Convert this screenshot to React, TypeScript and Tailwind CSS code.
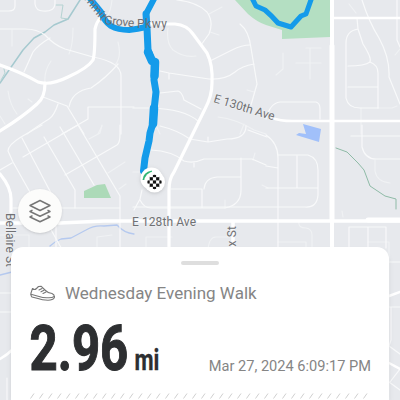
const minorRoads = [
  // northwest
  'M0 11H9Q15 11 15 6V0 M35 0V4Q36 11 43 11Q55 12 55 3V0',
  'M0 29H25Q37 29 45 35Q54 45 65 49L93 57Q121 62 121 76V134',
  'M50 38Q38 45 33 52L24 72',
  'M118 64Q106 78 91 88Q72 91 69 107',
  'M43 97L67 106L84 134 M58 104Q54 116 49 119Q36 127 27 134',
  'M62 134L88 119V107H134',
  // north middle
  'M177 0Q197 2 207 12Q214 22 209 34L201 45',
  'M240 24Q249 31 251 48L257 84L251 105',
  'M210 61L232 50Q242 45 250 45 M160 71L169 73L209 79Q225 80 235 72Q242 66 254 64 M169 73V79',
  'M160 93L178 91Q182 92 184 100L201 109 M133 108H151Q184 109 198 121',
  // middle
  'M8 151Q8 145 21 137L42 125M8 151L13 162L68 260 M22 138L51 193 M44 137L75 190V208 M0 170L12 163',
  'M60 127L94 185 M23 157L78 125 M65 175L117 145Q120 143 120 134V125 M78 125L120 196V248',
  'M13 208H120 M56 222V247',
  'M134 210L140 199L142 190 M140 200Q144 208 151 208H225Q241 205 241 190V158 M171 189H202V208 M204 189Q205 178 217 177H241',
  'M151 150Q172 151 184 161Q193 164 204 159H252L266 165 M194 162V167',
  'M160 126Q177 130 190 139L208 142L227 139Q246 139 246 126 M208 137V141 M248 130L267 137',
  // east
  'M266 119Q270 103 280 102H316Q320 103 320 109V119',
  'M357 18L358 29L363 44Q372 58 370 62Q365 66 348 66 M358 29Q346 31 346 43V98Q348 108 360 108H378',
  'M362 0Q369 22 379 38Q390 58 389 77L400 104 M370 62Q378 65 378 73V108 M348 87H378 M397 0V40L400 47',
  'M266 135Q278 143 278 158V250 M278 155H308Q318 158 318 170V195Q317 208 305 207H133 M297 156V188 M266 188H318 M266 166L278 168',
  'M362 125V147Q365 159 376 159H400 M351 136H400',
  'M349 248V227H386V248 M368 227V250',
  // strips beside the sheet
  'M0 293H12 M0 312H12 M389 262H400 M389 307H400 M391 307V340L389 346L400 354 M390 382L400 369 M7 378V400 M389 382L400 390',
]

// driveways and courts, barely lighter than the ground
const faintRoads = [
  'M73 28Q73 45 69 54 M12 30V46 M51 61Q44 71 45 82 M118 42Q122 57 115 65 M8 91Q10 105 17 114 M102 126L98 134 M0 116L5 124 M28 99L32 102',
  'M112 0Q111 11 106 19 M209 14L222 7 M210 32L219 35 M168 28Q166 43 173 50Q184 58 196 56 M247 90L254 92 M155 123L160 134 M218 117Q236 119 254 130L266 134 M244 124L240 134',
  'M89 139L100 133L102 125 M108 173L125 162 M119 189L126 184 M0 235H29V250 M97 250V237L112 235 M225 200V208 M133 172H142 M255 153L253 160 M262 185L268 188',
  'M146 250V237H172 M208 250Q209 237 216 237H232',
  'M283 53V69L276 75 M306 48H321 M296 63H321 M310 48V79 M378 108H392L397 106 M400 49L395 55 M361 108V134 M375 160V171Q377 182 390 183 M349 4L356 13',
  'M299 222Q298 228 306 228Q312 229 312 235V248 M278 242H306V250 M368 242H389V400 M342 211L343 217',
]

const majorRoads = [
  'M0 131Q24 116 37 104Q45 98 45 83',
  'M0 65Q23 73 38 82Q50 86 68 77Q88 68 93 60Q95 54 95 29Q97 21 100 19',
  'M150 24H175Q187 25 193 34L207 53Q213 65 212 83Q212 96 205 109L174 172Q169 179 169 190V252',
  'M0 174Q11 187 11 199V212',
]

function MapBackground() {
  return (
    <svg
      viewBox="0 0 400 400"
      className="absolute inset-0 size-full"
      fill="none"
      strokeLinecap="round"
      strokeLinejoin="round"
    >
      <path d="M235 0L248 14Q257 22 266 25L282 30V39L330 37V0Z" fill="#b4dfc2" />
      <path d="M84 194V191L97 185L105 184L111 198H84Z" fill="#acdab8" />
      <path d="M303 124L321 129L319 142L296 135L299 133L306 134Z" fill="#a1c0fa" />

      <path d="M80 0L68 19L54 25L45 32L34 38L23 50L0 83" stroke="#a5c9cf" strokeWidth="1.5" />
      <path d="M56 5H63L61 18L68 19 M4 69L5 73L1 80" stroke="#b5d3d2" />
      <path d="M336 148L347 152L358 163L364 170L370 186L385 196L396 199V209" stroke="#8fbba7" />
      <path
        d="M50 246Q55 241 61 239L71 238L86 230Q94 225 104 226L117 225Q124 233 134 234 M0 275L12 272"
        stroke="#b5c9ef"
        strokeWidth="1.3"
      />

      {faintRoads.map((d) => (
        <path key={d} d={d} stroke="#f0f2f4" strokeWidth="1.1" />
      ))}
      {minorRoads.map((d) => (
        <path key={d} d={d} stroke="#f8f9fa" strokeWidth="1.2" />
      ))}
      {majorRoads.map((d) => (
        <path key={d} d={d} stroke="#fff" strokeWidth="3.2" />
      ))}
      <path d="M0 359Q7 355 12 350 M389 363L400 369 M389 296L400 292" stroke="#fff" strokeWidth="2.5" />
      <path d="M272 118Q280 121 292 121H400 M334 18H400" stroke="#fff" strokeWidth="2.6" />
      <path d="M0 223H60L104 221H400 M233 221V250" stroke="#fff" strokeWidth="3.5" />
      <path d="M368 220H400" stroke="#fff" strokeWidth="5" />
      <path d="M332 0V250" stroke="#fff" strokeWidth="4" />
      <path d="M332 46V220" stroke="#fff" strokeWidth="5" />

      <g stroke="#149bea">
        <path
          d="M88 -4L101 12Q104 21 111 26Q118 30 129 30Q138 29 146 27 M155 -3L146 14L147 28"
          strokeWidth="6"
        />
        <path
          d="M146 14L147 28L148 50L152 61L155 63L154 80L156 92L154 110L153 123L150 133L149 141L145 158L143.5 171"
          strokeWidth="7"
        />
        <path d="M148 52L152 61L155 62L154.5 76 M154 108L153 124" strokeWidth="8.5" />
        <path d="M251 -4L256 6L265 10Q272 16 278 23L291 27L301 16L306 14L312 -3" strokeWidth="5" />
      </g>

      <g
        fill="#707174"
        stroke="#eff1f4"
        strokeOpacity="0.7"
        strokeWidth="1.5"
        paintOrder="stroke"
        fontFamily="Roboto, sans-serif"
        fontSize="12"
      >
        <text transform="translate(84 -1) rotate(52)" strokeWidth="0">mmit</text>
        <text transform="translate(104 24) rotate(6)" textLength="30" strokeWidth="0">Grove</text>
        <text x="137" y="28" textLength="30" strokeWidth="0">Pkwy</text>
        <text transform="translate(213 102) rotate(17)" textLength="63">E 130th Ave</text>
        <text x="132" y="226" textLength="64">E 128th Ave</text>
        <text transform="translate(6 213) rotate(90)" textLength="54">Bellaire St</text>
        <text transform="translate(236 260) rotate(-90)" textLength="34">nox St</text>
      </g>
    </svg>
  )
}

function FinishMarker() {
  return (
    <svg viewBox="0 0 34 34" className="absolute left-[136px] top-[163px] size-[34px] drop-shadow">
      <circle cx="15.5" cy="15.5" r="11" fill="#fff" />
      <path d="M8 17Q8.5 10.5 16 9" fill="none" stroke="#31b575" strokeWidth="3" />
      <circle cx="18.5" cy="19" r="10.5" fill="#fff" />
      <clipPath id="flag">
        <circle cx="18.5" cy="19" r="7.2" />
      </clipPath>
      <g clipPath="url(#flag)">
        {[0, 1, 2, 3, 4].map((row) =>
          [0, 1, 2, 3, 4].map((col) =>
            (row + col) % 2 ? null : (
              <rect
                key={`${row}-${col}`}
                x={10.5 + col * 3.2}
                y={11 + row * 3.2}
                width="3.2"
                height="3.2"
                fill="#111"
              />
            )
          )
        )}
      </g>
    </svg>
  )
}

function LayersButton() {
  return (
    <button
      aria-label="Map layers"
      className="absolute left-[18px] top-[189px] flex size-11 items-center justify-center rounded-full bg-[#fcfcfb] shadow-sm"
    >
      <svg viewBox="0 0 24 24" className="size-6" fill="none" stroke="#777" strokeWidth="1.5" strokeLinejoin="round">
        <path d="M12 1.5L22 6.5L12 11.5L2 6.5Z" />
        <path d="M4.5 11.2L2 12.5L12 17.2L22 12.5L19.5 11.2" />
        <path d="M4.5 16.7L2 18L12 22.7L22 18L19.5 16.7" />
      </svg>
    </button>
  )
}

function ShoeIcon() {
  return (
    <svg
      viewBox="0 0 26 17"
      className="h-[17px] w-[26px]"
      fill="none"
      stroke="#777"
      strokeWidth="1.1"
      strokeLinecap="round"
      strokeLinejoin="round"
    >
      <path d="M2.5 3.5Q4.5 5.5 6.5 3.5L8.5 1.5L11 1.2L15.5 5.5Q18 8 22 8.5Q25 10 24.3 12.8Q23 15.2 18 15.2Q12 15.2 8 13.5L2 12Q.5 10.5 1 8Z" />
      <path d="M1 9.2L9 11.5Q13 13 18 12.8Q22 13 24.3 11.5 M9 5L12 3.4 M11 6.8L14 5.2 M13 8.5L16 7" />
    </svg>
  )
}

function Distance() {
  return (
    <svg
      viewBox="0 0 134 76"
      className="h-[76px] w-[134px]"
      fill="#2d2f31"
      stroke="#2d2f31"
      fontFamily="Roboto, sans-serif"
      fontWeight="700"
    >
      <text transform="translate(-0.5 60) scale(0.78 1)" fontSize="63" strokeWidth="1.1">
        2.96
      </text>
      <text transform="translate(104.5 60) scale(0.76 1)" fontSize="29" strokeWidth="0.3">
        mi
      </text>
    </svg>
  )
}

export default function App() {
  return (
    <main className="relative flex h-[400px] w-[400px] flex-col justify-end overflow-hidden bg-[#e7e9ed] font-[Roboto,sans-serif]">
      <MapBackground />
      <FinishMarker />
      <LayersButton />

      <section className="relative mx-[11px] flex h-[153px] flex-col rounded-t-xl bg-white px-[19px] pt-3.5 shadow-md">
        <div className="h-1 w-[38px] self-center rounded-full bg-[#dedede]" />
        <div className="flex items-center gap-[9px] pt-4">
          <ShoeIcon />
          <h1 className="whitespace-nowrap text-[17px] leading-6 text-[#858585]">Wednesday Evening Walk</h1>
        </div>
        <div className="-mr-px flex items-end justify-between pt-[5px]">
          <Distance />
          <time className="whitespace-nowrap pb-3 text-[14.6px] leading-4 text-[#858585]">
            Mar 27, 2024 6:09:17 PM
          </time>
        </div>
        <svg viewBox="0 0 341 6" className="mt-[7px] h-[6px] w-[341px] shrink-0" stroke="#cfcfcf">
          {Array.from({ length: 38 }, (_, i) => (
            <path key={i} d={`M${i * 9 + 0.5} 5.5L${i * 9 + 4} .5`} />
          ))}
        </svg>
      </section>
    </main>
  )
}
